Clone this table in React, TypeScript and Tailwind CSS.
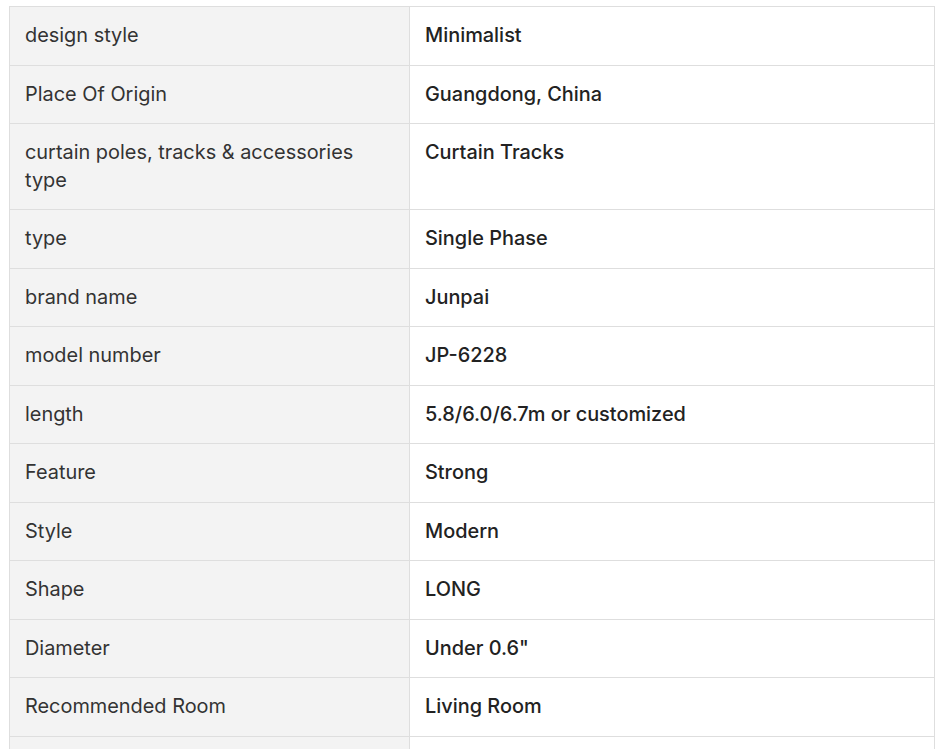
const rows: [string, string][] = [
  ["design style", "Minimalist"],
  ["Place Of Origin", "Guangdong, China"],
  ["curtain poles, tracks & accessories type", "Curtain Tracks"],
  ["type", "Single Phase"],
  ["brand name", "Junpai"],
  ["model number", "JP-6228"],
  ["length", "5.8/6.0/6.7m or customized"],
  ["Feature", "Strong"],
  ["Style", "Modern"],
  ["Shape", "LONG"],
  ["Diameter", 'Under 0.6"'],
  ["Recommended Room", "Living Room"],
];

export default function App() {
  return (
    <div className="h-[749px] overflow-hidden bg-white pl-[9px] pt-[6px] font-['Inter',sans-serif]">
      <table className="w-[926px] table-fixed border-collapse text-[19.9px] leading-[27.5px]">
        <colgroup>
          <col className="w-[400px]" />
          <col />
        </colgroup>
        <tbody>
          {rows.map(([label, value]) => (
            <tr key={label}>
              <td className="border border-[#dedede] bg-[#f3f3f3] px-[15px] py-[15px] align-top text-[#333333]">
                {label}
              </td>
              <td className="border border-[#dedede] bg-white px-[15px] py-[15px] align-top font-medium text-[#222222]">
                {value}
              </td>
            </tr>
          ))}
          {/* next row is cut off by the viewport */}
          <tr>
            <td className="h-[58px] border border-[#dedede] bg-[#f3f3f3]" />
            <td className="h-[58px] border border-[#dedede] bg-white" />
          </tr>
        </tbody>
      </table>
    </div>
  );
}
